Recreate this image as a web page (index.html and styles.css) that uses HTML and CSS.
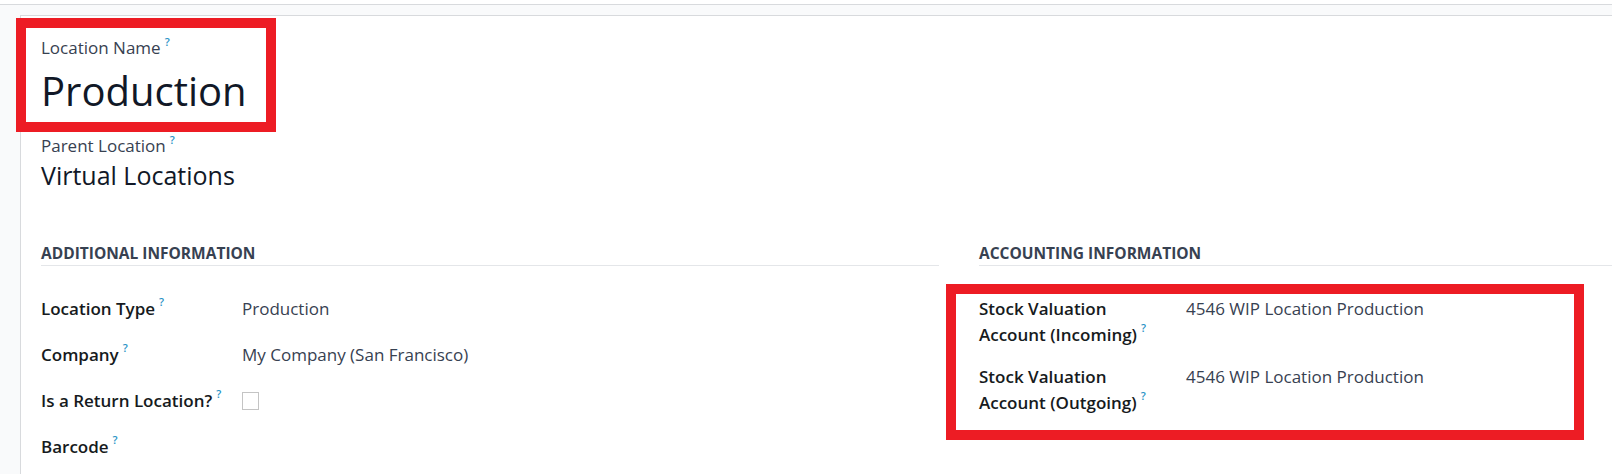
FILE: index.html
```html
<!DOCTYPE html>
<html lang="en">
<head>
    <meta charset="UTF-8">
    <title>Production - Location</title>
    <link rel="stylesheet" href="styles.css">
</head>
<body>
    <div class="content">
        <div class="sheet">
            <!-- Название -->
            <div class="title-block">
                <label class="field-label">Location Name<sup class="tip">?</sup></label>
                <h1 class="title-name">Production</h1>
            </div>

            <div class="parent-block">
                <label class="field-label">Parent Location<sup class="tip">?</sup></label>
                <div class="parent-value">Virtual Locations</div>
            </div>

            <!-- Группы полей -->
            <div class="groups">
                <div class="group group-left">
                    <div class="group-title">Additional Information</div>
                    <div class="rows">
                        <div class="row">
                            <div class="row-label">Location Type<sup class="tip">?</sup></div>
                            <div class="row-value">Production</div>
                        </div>
                        <div class="row">
                            <div class="row-label">Company<sup class="tip">?</sup></div>
                            <div class="row-value">My Company (San Francisco)</div>
                        </div>
                        <div class="row">
                            <div class="row-label">Is a Return Location?<sup class="tip">?</sup></div>
                            <div class="row-value"><span class="checkbox"></span></div>
                        </div>
                        <div class="row">
                            <div class="row-label">Barcode<sup class="tip">?</sup></div>
                            <div class="row-value"></div>
                        </div>
                    </div>
                </div>

                <div class="group group-right">
                    <div class="group-title">Accounting Information</div>
                    <div class="rows">
                        <div class="row">
                            <div class="row-label">Stock Valuation Account (Incoming)<sup class="tip">?</sup></div>
                            <div class="row-value">4546 WIP Location Production</div>
                        </div>
                        <div class="row">
                            <div class="row-label">Stock Valuation Account (Outgoing)<sup class="tip">?</sup></div>
                            <div class="row-value">4546 WIP Location Production</div>
                        </div>
                    </div>
                </div>
            </div>
        </div>
    </div>

    <!-- Красные рамки поверх формы -->
    <div class="highlight highlight-name"></div>
    <div class="highlight highlight-accounts"></div>
</body>
</html>
```

FILE: styles.css
```css
:root {
    --text-dark: #111827;
    --text-main: #374151;
    --label-color: #161a20;
    --tip-color: #2a93c6;
    --border-color: #d8dadd;
    --line-color: #e4e6e9;
    --bg-gray: #f9fafb;
    --mark-red: #ed1c24;
}

* {
    margin: 0;
    padding: 0;
    box-sizing: border-box;
}

html, body {
    height: 100%;
}

body {
    position: relative;
    overflow: hidden;
    background: #ffffff;
    font-family: 'Open Sans', 'Noto Sans', sans-serif;
    font-size: 17px;
    color: var(--text-main);
}

/* Фон формы */
.content {
    margin-top: 4px;
    height: calc(100% - 4px);
    border-top: 1px solid var(--border-color);
    background: var(--bg-gray);
    padding: 10px 0 0 20px;
}

.sheet {
    height: 100%;
    overflow: hidden;
    background: #ffffff;
    border-top: 1px solid var(--border-color);
    border-left: 1px solid var(--border-color);
    padding: 20px 0 0 20px;
}

.field-label {
    display: block;
    font-size: 17px;
    line-height: 24px;
    color: var(--text-main);
}

.tip {
    font-size: 11px;
    line-height: 1;
    vertical-align: top;
    margin-left: 4px;
    color: var(--tip-color);
    font-weight: 600;
}

.title-name {
    margin-top: 6px;
    font-size: 40px;
    font-weight: 400;
    line-height: 50px;
    color: var(--text-dark);
}

.parent-block {
    margin-top: 18px;
}

.parent-value {
    margin-top: 1px;
    font-size: 25px;
    line-height: 32px;
    color: var(--text-dark);
}

/* Группы */
.groups {
    display: grid;
    grid-template-columns: 898px 1fr;
    gap: 40px;
    margin-top: 51px;
}

.group-title {
    font-size: 15.5px;
    font-weight: 700;
    line-height: 22px;
    text-transform: uppercase;
    color: var(--text-main);
    padding-bottom: 1px;
    border-bottom: 1px solid var(--line-color);
}

.rows {
    display: flex;
    flex-direction: column;
    gap: 20px;
    margin-top: 30px;
}

.group-right .rows {
    gap: 16px;
}

.row {
    display: grid;
    grid-template-columns: 201px 1fr;
    line-height: 26px;
}

.group-right .row {
    grid-template-columns: 207px 1fr;
}

.row-label {
    font-weight: 600;
    color: var(--label-color);
    min-height: 26px;
}

.group-right .row-label {
    padding-right: 36px;
}

.row-value {
    color: var(--text-main);
}

.checkbox {
    display: block;
    width: 17px;
    height: 18px;
    margin-top: 4px;
    border: 1px solid #c4c4c4;
    background: #ffffff;
}

/* Выделение */
.highlight {
    position: absolute;
    border: 10px solid var(--mark-red);
}

.highlight-name {
    left: 16px;
    top: 18px;
    width: 260px;
    height: 114px;
}

.highlight-accounts {
    left: 946px;
    top: 284px;
    width: 638px;
    height: 156px;
}
```
